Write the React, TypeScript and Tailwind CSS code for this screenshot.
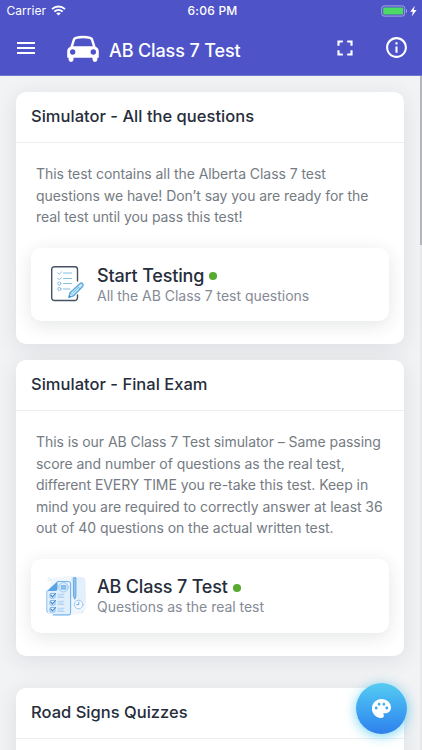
import type { ReactNode } from 'react';
import { MdFullscreen, MdInfoOutline, MdMenu, MdPalette } from 'react-icons/md';

function CarIcon() {
  return (
    <svg className="h-[28px] w-[34px] shrink-0" viewBox="0 0 34 28">
      <path
        fill="#fff"
        fillRule="evenodd"
        d="M9.500 1.700C14.200.5 19.800.5 24.500 1.700c1.500.4 2.300 1.200 2.700 2.500l2.400 7.600c2 .8 3.200 2.300 3.200 4.500v5.600c0 .6-.3.900-.9.900h-.5v1.800a2.450 2.450 0 0 1-4.900 0v-1.800H7.500v1.800a2.450 2.450 0 0 1-4.900 0v-1.800h-.5c-.6 0-.9-.3-.9-.9v-5.600c0-2.200 1.200-3.700 3.200-4.500l2.400-7.600c.4-1.300 1.200-2.100 2.700-2.500ZM7.200 11.200h19.600l-1.900-6.100c-.2-.7-.6-1-1.300-1.200-4.100-.9-9.100-.9-13.200 0-.7.2-1.100.5-1.300 1.200ZM6.700 14.300a2.700 2.700 0 1 0 0 5.400 2.700 2.700 0 0 0 0-5.400Zm20.600 0a2.700 2.700 0 1 0 0 5.400 2.700 2.700 0 0 0 0-5.400Z"
      />
    </svg>
  );
}

function ChecklistIcon() {
  return (
    <svg className="h-10 w-10 shrink-0" viewBox="0 0 40 40" fill="none" strokeLinecap="round" strokeLinejoin="round">
      <path d="M31.500 17V5.500a2.700 2.700 0 0 0-2.700-2.700H8.400a2.700 2.700 0 0 0-2.700 2.700v28.300a2.700 2.700 0 0 0 2.700 2.700h20.400a2.700 2.700 0 0 0 2.700-2.700V31" stroke="#465264" strokeWidth="1.400" />
      <g stroke="#86bde3" strokeWidth="1">
        <path d="M17.500 9h8.200M17.500 14.500h8.200M17.500 19.500h8.200M17.500 25h6.500" />
        <path d="m11.700 8.700 1.500 1.500L15.500 8M11.700 14.200l1.500 1.500 2.300-2.200" />
        <circle cx="13.400" cy="19.600" r="1.600" />
        <circle cx="13.400" cy="25" r="1.600" />
      </g>
      <path d="m22.800 33.500 1.200-4.800 9.800-9c.9-.8 2-.8 2.800.1.800.8.8 1.900 0 2.700l-9.300 9.500Z" fill="#c9e8fa" stroke="#5aa9da" strokeWidth="1.300" />
      <path d="m24.600 29 2.700 2.700M31.300 22.200l2.700 2.700M27.300 28.500l5-5" stroke="#5aa9da" strokeWidth=".8" />
      <path d="m22.800 33.500.7-2.500 1.700 1.700Z" fill="#3386bd" />
    </svg>
  );
}

function ExamIcon() {
  return (
    <svg className="h-10 w-10 shrink-0" viewBox="0 0 40 40" fill="none" strokeLinecap="round" strokeLinejoin="round">
      <path d="M7 2C14 .5 30-.5 37 1c3 2 3 15 3 23 0 8-1 13-5 14-9 1-23 3-29 1C0 33 1 10 7 2Z" fill="#eff6fd" />
      <path d="M25 1h10c4 0 4.500 2 4.500 6v20l-8.500-4-6-1Z" fill="#e3f0fc" />
      <circle cx="3.500" cy="3.500" r="1.500" stroke="#dcebfa" />
      <path d="M11.500 5.500H22a2.500 2.500 0 0 1 2.500 2.500v28.400a2.500 2.500 0 0 1-2.500 2.500H7.500M1 15v19a3 3 0 0 0 3 3" stroke="#77b4ec" strokeWidth="1.200" />
      <path d="M12 6h9.500A2.400 2.400 0 0 1 24 8.400v27a2.500 2.500 0 0 1-2.500 2.500H4a2.500 2.500 0 0 1-2.500-2.500V15Z" fill="#e1effd" />
      <path d="M1 15 11.500 5.300v7.200A2.500 2.500 0 0 1 9 15Z" fill="#5ba3e6" />
      <circle cx="17.500" cy="11.300" r="4.700" fill="#dcedfc" stroke="#93c4f0" strokeWidth=".9" />
      <path d="M14.800 9h5.400v4.700h-5.400Z" fill="#86bdee" />
      <g fill="#eef7ff" stroke="#7db7ec" strokeWidth="1">
        <rect x="4" y="17.500" width="5" height="4.600" rx="1" />
        <rect x="4" y="24.500" width="5" height="4.600" rx="1" />
        <rect x="4" y="31.500" width="5" height="4.600" rx="1" />
      </g>
      <path d="m4.800 19 1.700 1.800 3-3.300M4.800 26l1.700 1.800 3-3.300M4.800 33l1.700 1.800 3-3.300" stroke="#3f86c9" strokeWidth="1.100" />
      <path d="M12 18.300h6M12 20h5M12 21.500h6M12 25.300h6M12 27h5M12 28.500h6M12 32.300h6M12 34h5M12 35.500h6" stroke="#a9cff3" strokeWidth=".9" />
      <path d="M27.700 1.800h2.200v18.500l-1.100 2.900-1.100-2.900Z" fill="#91c6f4" stroke="#64a6e2" />
      <circle cx="32.600" cy="28.500" r="4.300" fill="#f7fbff" stroke="#9bc6ee" strokeWidth="1" />
      <path d="M32.800 26v2.700h-2.500" stroke="#6face5" />
      <path d="M36 36h1" stroke="#cfe4f8" />
    </svg>
  );
}

function StatusBar() {
  return (
    <div className="grid h-[22px] grid-cols-3 items-center text-white">
      <div className="flex items-center gap-[5px] pl-[6.500px]">
        <span className="text-[12px] leading-none tracking-[0.02px]">Carrier</span>
        <svg className="mb-px h-[11px] w-[15px]" viewBox="0 0 15 11" fill="none" stroke="#fff" strokeWidth="1.900">
          <path d="M1 4.100C4.700.6 10.300.6 14 4.100M3.300 6.600c2.500-2.300 5.900-2.300 8.400 0" />
          <path d="M5.200 8.300c1.400-1.200 3.200-1.200 4.600 0L7.500 10.600Z" fill="#fff" stroke="none" />
        </svg>
      </div>
      <span className="pl-[3px] text-center text-[12px] font-medium leading-none tracking-[0.25px]">6:06 PM</span>
      <div className="flex justify-end pr-[4px]">
        <svg className="h-[12px] w-[37px]" viewBox="0 0 37 12">
          <rect x=".7" y=".9" width="23" height="10.200" rx="2.400" fill="none" stroke="#a5a7e7" />
          <rect x="2.200" y="2.400" width="20" height="7.200" rx="1.200" fill="#4cd964" />
          <path d="M25 4c1.500.6 1.500 3.400 0 4Z" fill="#a5a7e7" />
          <path d="m33.800.8-4.600 6h2.700l-1.200 4.600 4.900-6.300h-2.800Z" fill="#fff" />
        </svg>
      </div>
    </div>
  );
}

function Card({ title, children, className = '' }: { title: string; children?: ReactNode; className?: string }) {
  return (
    <section className={`w-[388.500px] shrink-0 rounded-[10px] bg-white shadow-[0_4px_22px_rgba(34,41,47,0.1)] ${className}`}>
      <h2 className="h-[51.400px] border-b border-[#edeef0] pl-[15.500px] text-[16.500px] font-medium leading-[49px] tracking-[0.02px] text-[#262d3b]">
        {title}
      </h2>
      {children}
    </section>
  );
}

function Description({ lines }: { lines: string[] }) {
  return (
    <p className="pl-[20.500px] pt-[20.100px] text-[14px] leading-[21.400px] tracking-[-0.06px] text-[#757b83]">
      {lines.map((line) => (
        <span key={line} className="block whitespace-nowrap">{line}</span>
      ))}
    </p>
  );
}

function TestButton({ icon, title, subtitle, className }: { icon: ReactNode; title: string; subtitle: string; className: string }) {
  return (
    <button className={`mx-[15px] flex h-[73.500px] w-[358px] items-center rounded-[10px] bg-white pl-[15px] text-left shadow-[0_4px_18px_rgba(34,41,47,0.12)] ${className}`}>
      {icon}
      <span className="ml-[11.500px] block">
        <span className="flex h-[23px] items-center gap-[5px] text-[18px] font-medium leading-[23px] tracking-[-0.18px] text-[#262d3b]">
          {title}
          <span className="mt-[2px] size-2 rounded-full bg-[#56ab2f]" />
        </span>
        <span className="-mt-px block text-[14px] leading-[19px] tracking-[-0.03px] text-[#858b96]">{subtitle}</span>
      </span>
    </button>
  );
}

export default function App() {
  return (
    <div className="relative h-[750px] w-[422px] overflow-hidden bg-[#f2f3f5] font-['Inter','Liberation_Sans',sans-serif]">
      <header className="relative z-10 h-[76px] border-b border-[#7275d0] bg-[#4e53c8]">
        <StatusBar />
        <div className="flex h-[53px] items-center pl-[14px] pr-[13px] text-white">
          <MdMenu className="mb-[2px] size-[24px]" />
          <div className="ml-[28px] flex items-center gap-[9px]">
            <CarIcon />
            <h1 className="pt-[4px] text-[18px] font-medium leading-[24px] tracking-[-0.12px]">AB Class 7 Test</h1>
          </div>
          <div className="mb-[2px] ml-auto flex items-center gap-[26px]">
            <MdFullscreen className="size-[26px]" />
            <MdInfoOutline className="size-[25px]" />
          </div>
        </div>
      </header>

      <main className="flex flex-col items-start pl-[15.500px] pt-[16px]">
        <Card title="Simulator - All the questions" className="h-[252px]">
          <Description
            lines={[
              'This test contains all the Alberta Class 7 test',
              'questions we have! Don’t say you are ready for the',
              'real test until you pass this test!',
            ]}
          />
          <TestButton icon={<ChecklistIcon />} title="Start Testing" subtitle="All the AB Class 7 test questions" className="mt-[20px]" />
        </Card>
        <Card title="Simulator - Final Exam" className="mt-[16px] h-[295.500px]">
          <Description
            lines={[
              'This is our AB Class 7 Test simulator – Same passing',
              'score and number of questions as the real test,',
              'different EVERY TIME you re-take this test. Keep in',
              'mind you are required to correctly answer at least 36',
              'out of 40 questions on the actual written test.',
            ]}
          />
          <TestButton icon={<ExamIcon />} title="AB Class 7 Test" subtitle="Questions as the real test" className="mt-[20.500px]" />
        </Card>
        <Card title="Road Signs Quizzes" className="mt-[32px] h-[250px]" />
      </main>

      <div className="absolute bottom-0 right-0 top-[76px] w-[2px] bg-[#e8e9eb]">
        <div className="h-[169px] bg-[#b4b6b9]" />
      </div>
      <button className="absolute left-[355.500px] top-[683px] flex size-[51px] items-center justify-center rounded-full bg-linear-to-b from-[#56ccf2] to-[#2f80ed] text-white shadow-[0_2px_12px_rgba(86,204,242,0.8)]">
        <MdPalette className="size-[23px]" />
      </button>
    </div>
  );
}
